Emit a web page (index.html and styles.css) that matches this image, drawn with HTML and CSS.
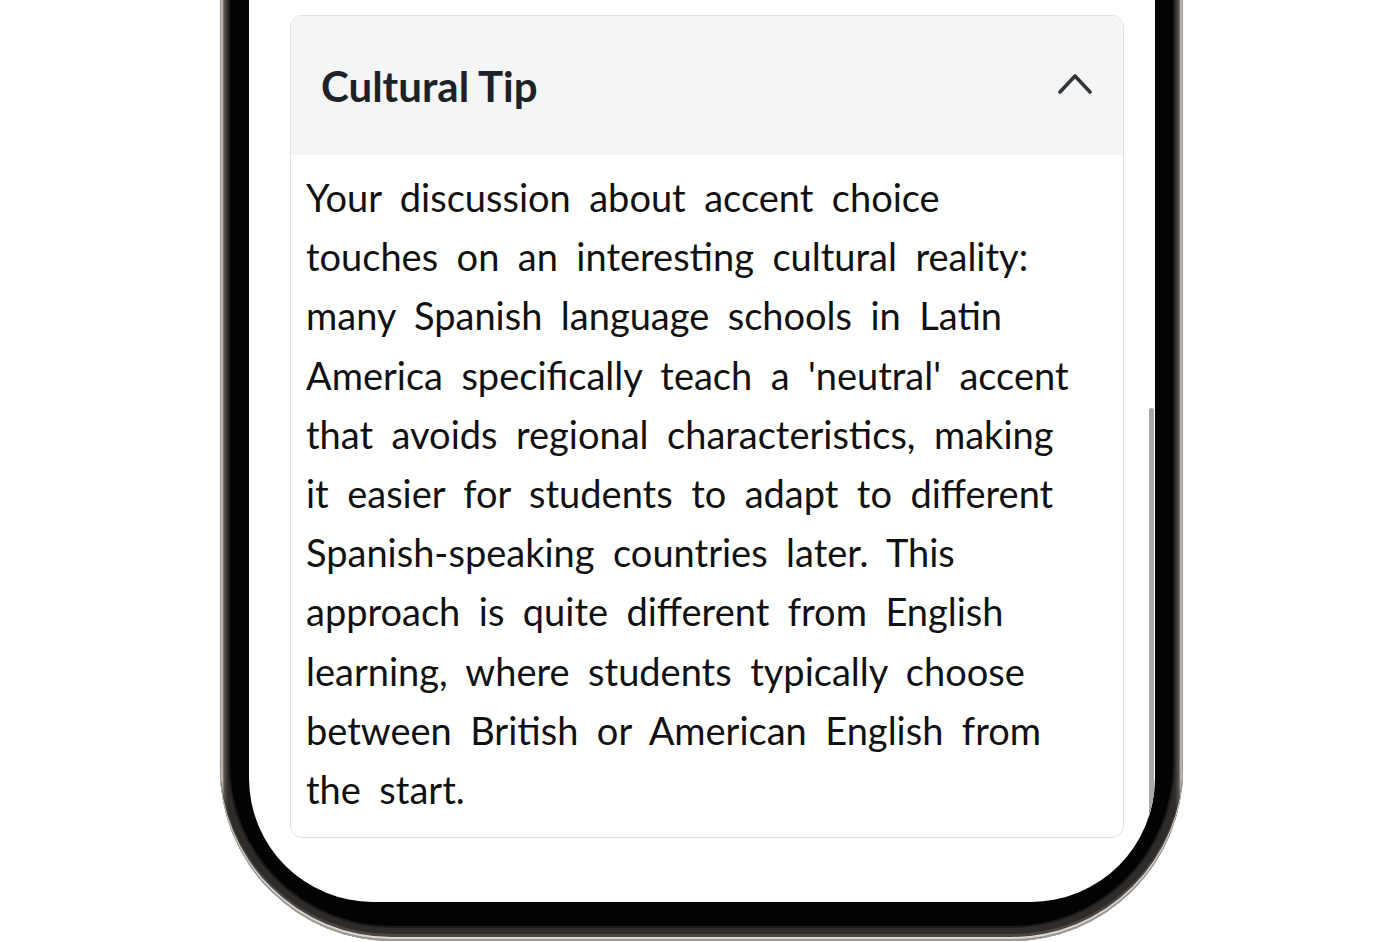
FILE: index.html
```html
<!DOCTYPE html>
<html lang="en">
<head>
    <meta charset="UTF-8">
    <meta name="viewport" content="width=device-width, initial-scale=1.0">
    <title>Cultural Tip</title>
    <link rel="stylesheet" href="styles.css">
</head>
<body>
    <div class="stage">
        <div class="phone">
            <div class="bezel">
                <div class="screen">
                    <div class="tip-card">
                        <div class="tip-header">
                            <h2>Cultural Tip</h2>
                            <svg class="chevron" width="34" height="22" viewBox="0 0 34 22">
                                <path d="M2 19 L17 3 L32 19" fill="none" stroke="#30353a" stroke-width="3.6" stroke-linecap="round" stroke-linejoin="round"/>
                            </svg>
                        </div>
                        <div class="tip-body">
                            <p>Your discussion about accent choice touches on an interesting cultural reality: many Spanish language schools in Latin America specifically teach a 'neutral' accent that avoids regional characteristics, making it easier for students to adapt to different Spanish-speaking countries later. This approach is quite different from English learning, where students typically choose between British or American English from the start.</p>
                        </div>
                    </div>
                    <div class="scrollbar"></div>
                </div>
            </div>
        </div>
    </div>
</body>
</html>
```

FILE: styles.css
```css
body {
    margin: 0;
    background: #fff;
    font-family: Lato, "Noto Sans", sans-serif;
}
.stage {
    height: 942px;
    overflow: hidden;
    padding-left: 220px;
}
/* device frame: metal rim, black bezel, white screen */
.phone {
    width: 963px;
    height: 941px;
    padding: 0 8px 13px 8px;
    box-sizing: border-box;
    border-radius: 0 0 172px 172px;
    background: linear-gradient(90deg, #8d8883 0, #cfcac4 2px, #5a5652 4px, #2e2b29 8px, #2e2b29 calc(100% - 8px), #5a5652 calc(100% - 4px), #cfcac4 calc(100% - 2px), #8d8883 100%);
    box-shadow: inset 0 -2px 0 #9d9892, inset 0 -4px 0 #ddd8d2, inset 0 -7px 0 #4a4643;
}
.bezel {
    height: 100%;
    box-sizing: border-box;
    padding: 0 18px 24px 19px;
    background: #040303;
    border: 2px solid #1d1b1a;
    border-top: none;
    border-radius: 0 0 164px 164px;
}
.screen {
    position: relative;
    height: 100%;
    box-sizing: border-box;
    overflow: hidden;
    background: #fff;
    border-radius: 0 0 124px 124px;
    padding: 15px 31px 0 41px;
}
.tip-card {
    border: 1px solid #dfe2e5;
    border-radius: 12px;
    overflow: hidden;
    background: #fff;
}
.tip-header {
    height: 139px;
    background: #f3f5f7;
    display: flex;
    align-items: center;
    justify-content: space-between;
    padding: 0 31px 0 30px;
}
.tip-header h2 {
    margin: 0;
    font-size: 42px;
    font-weight: 700;
    color: #1e2226;
}
.chevron {
    margin-bottom: 4px;
}
.tip-body {
    padding: 13px 51px 18px 15px;
}
.tip-body p {
    margin: 0;
    font-size: 38px;
    line-height: 59.2px;
    word-spacing: 0.23em;
    color: #111;
}
.scrollbar {
    position: absolute;
    right: 1px;
    top: 408px;
    width: 5px;
    height: 470px;
    border-radius: 3px;
    background: #a9a9a9;
}
```
